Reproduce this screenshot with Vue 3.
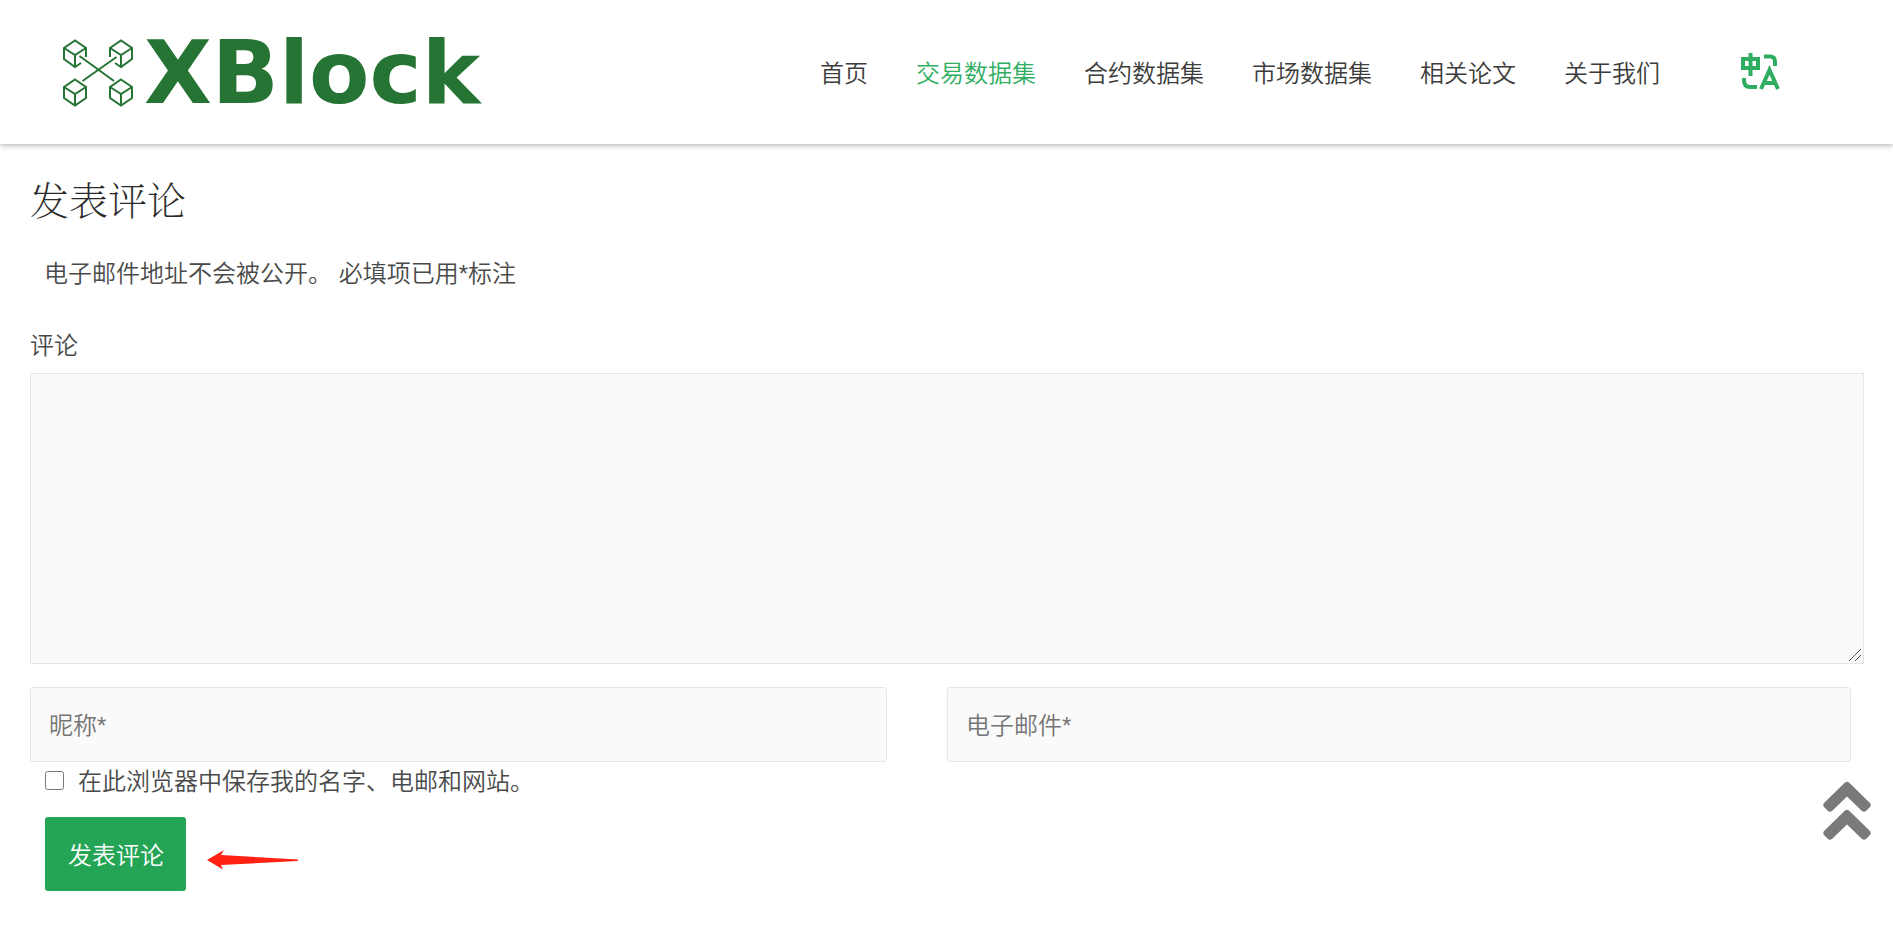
<script setup>
import { ref } from 'vue'

const links = ['首页', '交易数据集', '合约数据集', '市场数据集', '相关论文', '关于我们']
const active = '交易数据集'

const comment = ref('')
const nickname = ref('')
const email = ref('')
const remember = ref(false)

const toTop = () => window.scrollTo({ top: 0, behavior: 'smooth' })
</script>

<template>
  <div class="page">
    <header class="header">
      <a class="logo" href="#" aria-label="XBlock">
        <svg class="logo-mark" width="72" height="68" viewBox="0 0 72 68" aria-hidden="true">
          <g fill="none" stroke="#257434" stroke-width="2">
            <path d="M19 24L13 28L2 20V9L13 1.500L24 9V18M2 9L13 16L24 9M13 16V28" />
            <path d="M53 24L59 28L70 20V9L59 1.500L48 9V18M48 9L59 16L70 9M59 16V28" />
            <path d="M13 40.500L24 48V59L13 66.500L2 59V48ZM2 48L13 55L24 48M13 55V66" />
            <path d="M59 40.500L70 48V59L59 66.500L48 59V48ZM48 48L59 55L70 48M59 55V66" />
            <path d="M17.500 17L52 42M54.500 18L20.500 42" />
          </g>
        </svg>
        <span class="logo-name">XBlock</span>
      </a>
      <nav class="nav">
        <a v-for="link in links" :key="link" href="#" :class="{ active: link === active }">{{ link }}</a>
      </nav>
      <button class="lang" type="button" aria-label="Language">
        <svg width="40" height="40" viewBox="0 0 40 40" fill="none" stroke="#2fae62" stroke-width="4" aria-hidden="true">
          <path d="M3 8H18V17H3ZM10.500 2V25" />
          <path d="M24 5.500H30Q35 5.500 35 10.500V15" />
          <path d="M4 27V29Q4 36 10 36H17" />
          <path d="M21 38L29.500 19L38 38M24 32H35" />
        </svg>
      </button>
    </header>

    <main class="content">
      <h3 class="title">发表评论</h3>
      <p class="notes">电子邮件地址不会被公开。 必填项已用*标注</p>
      <form class="form" @submit.prevent>
        <label class="label" for="comment">评论</label>
        <div class="area-box">
          <textarea id="comment" v-model="comment" class="field area"></textarea>
          <svg class="grip" width="14" height="14" viewBox="0 0 14 14" stroke="#555" aria-hidden="true">
            <path d="M1 13L13 1M7 13L13 7" />
          </svg>
        </div>
        <div class="pair">
          <input v-model="nickname" class="field line" type="text" placeholder="昵称*" aria-label="昵称" />
          <input v-model="email" class="field line" type="email" placeholder="电子邮件*" aria-label="电子邮件" />
        </div>
        <div class="remember">
          <input id="remember" v-model="remember" type="checkbox" />
          <label for="remember">在此浏览器中保存我的名字、电邮和网站。</label>
        </div>
        <div class="actions">
          <button class="submit" type="submit">发表评论</button>
          <svg class="arrow" width="92" height="20" viewBox="0 0 92 20" aria-hidden="true">
            <path d="M0 10L17 0L14 5L91 9.500V11L14 15L16 19.500Z" fill="#ff2113" />
          </svg>
        </div>
      </form>
    </main>

    <button class="top" type="button" aria-label="Top" @click="toTop">
      <svg width="48" height="60" viewBox="0 0 48 60" fill="#7a7a7a" aria-hidden="true">
        <path id="chevron" d="M22 1.500Q24 0 26 1.500L47 22Q48.500 24 47 26L43 30Q41 31.500 39 30L24 15.500L9 30Q7 31.500 5 30L1 26Q-.500 24 1 22Z" />
        <use href="#chevron" y="28" />
      </svg>
    </button>
  </div>
</template>

<style>
body {
  margin: 0;
  background: #fff;
}
</style>

<style scoped>
.page {
  font-family: "Liberation Sans", "Noto Sans CJK SC", sans-serif;
  font-size: 24px;
  font-weight: 350;
  line-height: 36px;
  color: #4a4a4a;
}

.header {
  display: flex;
  align-items: center;
  height: 144px;
  padding: 2px 113px 0 62px;
  box-sizing: border-box;
  background: #fff;
  box-shadow: 0 1px 6px rgba(0, 0, 0, 0.35);
}

.logo {
  display: flex;
  align-items: center;
  gap: 10px;
  margin-right: auto;
  color: #257434;
  text-decoration: none;
}

.logo-name {
  font-family: "DejaVu Sans", sans-serif;
  font-size: 88px;
  font-weight: 700;
  line-height: 88px;
}

.nav {
  display: flex;
  gap: 48px;
  margin-right: 80px;
  padding-top: 2px;
}

.nav a {
  color: #3c3c3c;
  text-decoration: none;
  white-space: nowrap;
}

.nav a.active {
  color: #2fae62;
}

.lang,
.top {
  display: block;
  padding: 0;
  border: 0;
  background: none;
  cursor: pointer;
}

.lang {
  margin-bottom: 4px;
}

.lang svg,
.top svg {
  display: block;
}

.content {
  padding: 34px 29px 35px 30px;
}

.title {
  margin: 0;
  font-family: "Liberation Serif", "Noto Serif CJK SC", "Noto Sans CJK SC", serif;
  font-size: 39px;
  font-weight: 200;
  line-height: 48px;
  color: #2a2a2a;
}

.notes {
  margin: 30px 0 0;
  padding-left: 14px;
}

.form {
  margin-top: 36px;
}

.label {
  display: block;
  margin-bottom: 9px;
}

.field {
  display: block;
  width: 100%;
  box-sizing: border-box;
  border: 1px solid #e6e6e6;
  background: #fafafa;
  color: #4a4a4a;
  font: inherit;
}

.field::placeholder {
  color: #757575;
}

.area-box {
  position: relative;
}

.area {
  height: 291px;
  padding: 16px;
  resize: vertical;
}

.area::-webkit-resizer {
  background: transparent;
}

.grip {
  position: absolute;
  right: 2px;
  bottom: 2px;
  pointer-events: none;
}

.pair {
  display: grid;
  grid-template-columns: 857fr 904fr;
  column-gap: 60px;
  margin-top: 23px;
  padding-right: 13px;
}

.line {
  height: 75px;
  padding: 2px 18px 0;
  border-radius: 3px;
}

.remember {
  display: flex;
  align-items: flex-start;
  gap: 14px;
  margin-top: 2px;
  padding-left: 15px;
}

.remember input {
  width: 19px;
  height: 19px;
  margin: 7px 0 0;
}

.actions {
  display: flex;
  align-items: center;
  gap: 21px;
  margin-top: 17px;
  padding-left: 15px;
}

.submit {
  height: 74px;
  padding: 4px 22px 0 23px;
  border: 0;
  border-radius: 3px;
  background: #24a556;
  color: #fff;
  font: inherit;
  cursor: pointer;
}

.arrow {
  margin-top: 12px;
}

.top {
  position: fixed;
  right: 22px;
  bottom: 85px;
}
</style>
